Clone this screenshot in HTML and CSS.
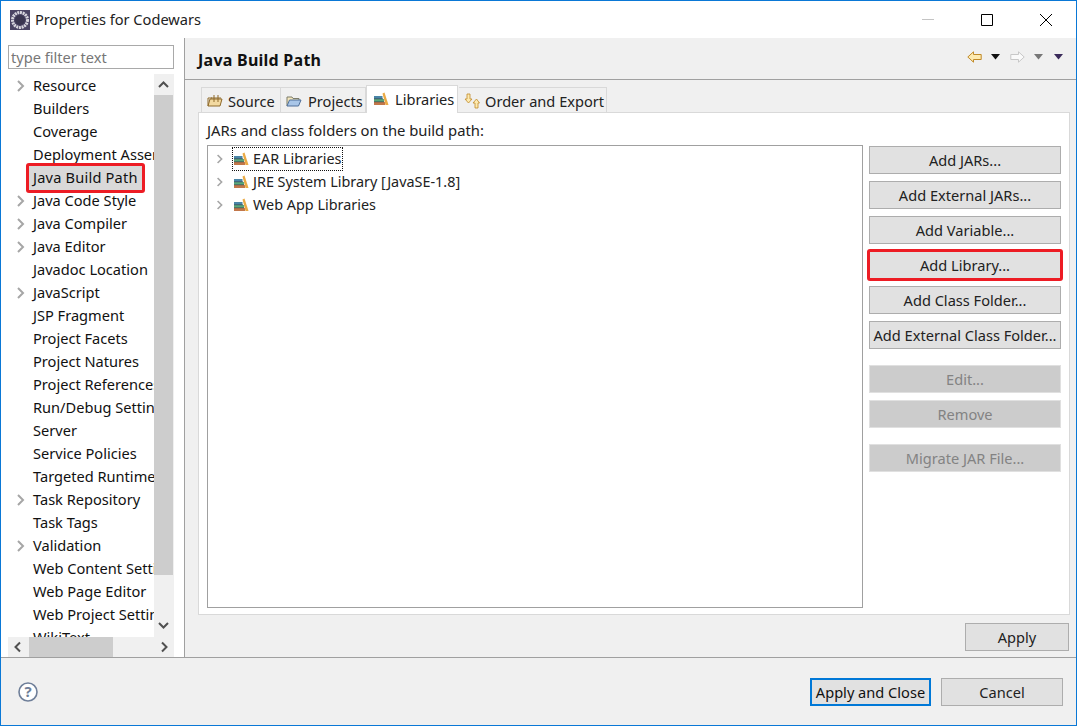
FILE: index.html
```html
<!DOCTYPE html>
<html lang="en">
<head>
<meta charset="utf-8">
<title>Properties for Codewars</title>
<link rel="stylesheet" href="styles.css">
</head>
<body>
<svg class="defs" width="0" height="0" aria-hidden="true">
  <symbol id="lib" viewBox="0 0 16 16">
    <path d="M1 5h8.500v3H1z" fill="#4a86a8"/>
    <path d="M1 8h10v3H1z" fill="#5aa97c"/>
    <path d="M1 11h11v3H1z" fill="#c2774a"/>
    <path d="M1 7.800h9M1 10.800h10" stroke="#3a4650" stroke-width=".7"/>
    <path d="M9.500 2.500l2-1 4 12.500h-3z" fill="#eaaa45"/>
  </symbol>
  <symbol id="chev" viewBox="0 0 10 12">
    <path d="M2 1l5 5-5 5" fill="none" stroke="#a6a6a6" stroke-width="2"/>
  </symbol>
</svg>
<div class="window">
  <header class="titlebar">
    <svg class="appicon" viewBox="0 0 20 20">
      <rect width="20" height="20" fill="#4b4464"/>
      <circle cx="10" cy="10" r="7.500" fill="none" stroke="#d8d6de" stroke-width="3" stroke-dasharray="2 .7"/>
      <circle cx="10" cy="10" r="5" fill="#3a3550"/>
    </svg>
    <span class="title">Properties for Codewars</span>
    <div class="winctl">
      <svg viewBox="0 0 12 12"><path d="M0 5.500h12" stroke="#c4c4c4"/></svg>
      <svg viewBox="0 0 12 12"><path d="M.5.500h11v11H.5z" fill="none" stroke="#000"/></svg>
      <svg viewBox="0 0 12 12"><path d="M0 0l12 12M12 0L0 12" stroke="#000"/></svg>
    </div>
  </header>
  <div class="main">
    <aside class="side">
      <input class="filter" placeholder="type filter text">
      <div class="treewrap">
        <div class="navtree">
          <ul class="nodes">
            <li class="node"><svg class="exp"><use href="#chev"/></svg>Resource</li>
            <li class="node">Builders</li>
            <li class="node">Coverage</li>
            <li class="node">Deployment Assembly</li>
            <li class="node"><span class="sel">Java Build Path</span></li>
            <li class="node"><svg class="exp"><use href="#chev"/></svg>Java Code Style</li>
            <li class="node"><svg class="exp"><use href="#chev"/></svg>Java Compiler</li>
            <li class="node"><svg class="exp"><use href="#chev"/></svg>Java Editor</li>
            <li class="node">Javadoc Location</li>
            <li class="node"><svg class="exp"><use href="#chev"/></svg>JavaScript</li>
            <li class="node">JSP Fragment</li>
            <li class="node">Project Facets</li>
            <li class="node">Project Natures</li>
            <li class="node">Project References</li>
            <li class="node">Run/Debug Settings</li>
            <li class="node">Server</li>
            <li class="node">Service Policies</li>
            <li class="node">Targeted Runtimes</li>
            <li class="node"><svg class="exp"><use href="#chev"/></svg>Task Repository</li>
            <li class="node">Task Tags</li>
            <li class="node"><svg class="exp"><use href="#chev"/></svg>Validation</li>
            <li class="node">Web Content Settings</li>
            <li class="node">Web Page Editor</li>
            <li class="node">Web Project Settings</li>
            <li class="node">WikiText</li>
          </ul>
        </div>
        <div class="vscroll">
          <svg class="sb-btn" viewBox="0 0 19 21"><path d="M5 13l4.500-4.500 4.500 4.500" fill="none" stroke="#505050" stroke-width="2"/></svg>
          <div class="vthumb"></div>
          <svg class="sb-btn end" viewBox="0 0 19 21"><path d="M5 8l4.500 4.500 4.500-4.500" fill="none" stroke="#505050" stroke-width="2"/></svg>
        </div>
      </div>
      <div class="hscroll">
        <svg class="hb" viewBox="0 0 21 20"><path d="M12 5.500l-4.500 4.500 4.500 4.500" fill="none" stroke="#505050" stroke-width="2"/></svg>
        <div class="hthumb"></div>
        <svg class="hb" viewBox="0 0 21 20"><path d="M9 5.500l4.500 4.500-4.500 4.500" fill="none" stroke="#505050" stroke-width="2"/></svg>
      </div>
    </aside>
    <section class="content">
      <div class="pagehead">
        <h1 class="pagetitle">Java Build Path</h1>
        <div class="navbtns">
          <svg class="arrow" viewBox="0 0 15 12"><path d="M.8 6L6.500.8v2.700h7.700v5H6.500v2.700z" fill="#fdeab0" stroke="#c08a2a"/></svg>
          <svg class="tri" viewBox="0 0 9 6"><path d="M0 0h9L4.500 5.500z" fill="#111"/></svg>
          <svg class="arrow fwd" viewBox="0 0 15 12"><path d="M14.200 6L8.500.8v2.700H.8v5h7.700v2.700z" fill="#fafafa" stroke="#c8c8c8"/></svg>
          <svg class="tri" viewBox="0 0 9 6"><path d="M0 0h9L4.500 5.500z" fill="#777"/></svg>
          <svg class="tri last" viewBox="0 0 9 6"><path d="M0 0h9L4.500 5.500z" fill="#3a2a5a"/></svg>
        </div>
      </div>
      <div class="pagebody">
        <div class="tabs">
          <div class="tab t-source">
            <svg class="tabicon src" viewBox="0 0 16 16"><path d="M1 13l2-7h12l-2 7z" fill="#f2d9a0" stroke="#8f6a2a"/><path d="M1 13V5h4M7 2v7M11 2v7M4 5h10" fill="none" stroke="#8f6a2a"/></svg>Source
          </div>
          <div class="tab t-projects">
            <svg class="tabicon" viewBox="0 0 16 16"><path d="M1 13V4h5l1 1.500h6V8" fill="#f5e7bd" stroke="#7c7c6a"/><path d="M1 13l2.500-6H15l-2.500 6z" fill="#a9c6e8" stroke="#4f6f99"/></svg>Projects
          </div>
          <div class="tab active">
            <svg class="tabicon"><use href="#lib"/></svg>Libraries
          </div>
          <div class="tab t-order">
            <svg class="tabicon src" viewBox="0 0 16 16"><path d="M3 1h3v5h2L4.500 10 1 6h2z" fill="#fdeab0" stroke="#c08a2a" stroke-width=".8"/><path d="M11 15h3v-5h1.500L12.500 6 9 10h2z" fill="#fdeab0" stroke="#c08a2a" stroke-width=".8"/></svg>Order and Export
          </div>
        </div>
        <div class="panel">
          <div class="jarlabel">JARs and class folders on the build path:</div>
          <div class="panelrow">
            <div class="libtree">
              <div class="libitem"><svg class="libexp"><use href="#chev"/></svg><span class="libfocus"><svg class="libicon"><use href="#lib"/></svg>EAR Libraries</span></div>
              <div class="libitem"><svg class="libexp"><use href="#chev"/></svg><span class="libplain"><svg class="libicon"><use href="#lib"/></svg>JRE System Library [JavaSE-1.8]</span></div>
              <div class="libitem"><svg class="libexp"><use href="#chev"/></svg><span class="libplain"><svg class="libicon"><use href="#lib"/></svg>Web App Libraries</span></div>
            </div>
            <div class="btncol">
              <button class="btn">Add JARs...</button>
              <button class="btn">Add External JARs...</button>
              <button class="btn">Add Variable...</button>
              <button class="btn marked">Add Library...</button>
              <button class="btn">Add Class Folder...</button>
              <button class="btn">Add External Class Folder...</button>
              <button class="btn off gap-a">Edit...</button>
              <button class="btn off">Remove</button>
              <button class="btn off gap-b">Migrate JAR File...</button>
            </div>
          </div>
        </div>
        <div class="applyrow"><button class="btn apply">Apply</button></div>
      </div>
    </section>
  </div>
  <footer class="footer">
    <svg class="help" viewBox="0 0 20 20"><circle cx="10" cy="10" r="9" fill="#fff" stroke="#6f7f99" stroke-width="1.600"/><text x="10" y="15" text-anchor="middle" class="helpq">?</text></svg>
    <button class="btn default">Apply and Close</button>
    <button class="btn cancel">Cancel</button>
  </footer>
</div>
</body>
</html>
```
FILE: styles.css
```css
* { box-sizing: border-box; }
html, body { margin: 0; padding: 0; }
body {
  width: 1077px;
  height: 726px;
  overflow: hidden;
  background: #fff;
  color: #111;
  font-family: "Noto Sans", "Open Sans", sans-serif;
  font-size: 14.6px;
}
.defs { position: absolute; }
.window {
  width: 1077px;
  height: 726px;
  display: flex;
  flex-direction: column;
  border: 1px solid #0a78d6;
}
.titlebar {
  height: 37px;
  flex: none;
  display: flex;
  align-items: center;
  padding-left: 9px;
  background: #fff;
}
.appicon { width: 20px; height: 20px; margin-right: 5px; }
.title { font-size: 14.6px; color: #222; margin-top: -2px; }
.winctl { margin-left: auto; display: flex; align-items: center; margin-right: 24px; gap: 47px; }
.winctl svg { width: 12px; height: 12px; display: block; }
.main { flex: 1; display: flex; min-height: 0; }
.side {
  width: 184px;
  flex: none;
  background: #fff;
  padding: 7px 10px 0 7px;
  border-right: 1px solid #a0a0a0;
  display: flex;
  flex-direction: column;
}
.filter {
  height: 24px;
  width: 166px;
  flex: none;
  border: 1px solid #a9a9a9;
  padding: 0 2px;
  font: inherit;
  background: #fff;
}
.filter::placeholder { color: #777; opacity: 1; }
.treewrap { display: flex; height: 563px; margin-top: 5px; flex: none; width: 166px; }
.navtree { width: 146px; overflow: hidden; flex: none; }
.nodes { list-style: none; margin: 0; padding: 0; }
.node {
  height: 23px;
  line-height: 23px;
  padding-left: 25px;
  position: relative;
  white-space: nowrap;
}
.exp { position: absolute; left: 8px; top: 6px; width: 10px; height: 12px; }
.sel {
  display: inline-block;
  height: 26px;
  line-height: 25px;
  margin-left: -5px;
  padding: 0 5px;
  background: #d9d9d9;
  outline: 3px solid #ed1c24;
  outline-offset: -1px;
  position: relative;
  top: -1px;
  vertical-align: top;
  width: 115px;
  letter-spacing: .2px;
  border-radius: 1px;
}
.vscroll { width: 20px; flex: none; background: #f0f0f0; display: flex; flex-direction: column; }
.sb-btn { width: 19px; height: 21px; display: block; flex: none; }
.vthumb { width: 19px; height: 480px; background: #cdcdcd; flex: none; }
.sb-btn.end { margin-top: auto; margin-bottom: 1px; }
.hscroll { width: 166px; height: 20px; background: #f0f0f0; display: flex; flex: none; }
.hb { width: 21px; height: 20px; display: block; flex: none; }
.hthumb { width: 84px; background: #cdcdcd; flex: none; margin-right: auto; }
.content { flex: 1; min-width: 0; background: #f0f0f0; display: flex; flex-direction: column; }
.pagehead {
  height: 42px;
  flex: none;
  border-bottom: 1px solid #a0a0a0;
  display: flex;
  align-items: center;
  padding: 2px 13px 0;
}
.pagetitle { margin: 0; font-size: 16px; font-weight: 700; color: #111; line-height: 24px; letter-spacing: .25px; }
.navbtns { margin-left: auto; display: flex; align-items: center; position: relative; top: -3px; }
.arrow { width: 15px; height: 12px; display: block; }
.tri { width: 9px; height: 6px; display: block; margin-left: 9px; }
.arrow.fwd { margin-left: 10px; }
.tri.last { margin-left: 11px; }
.pagebody { padding: 6px 7px 0 13px; flex: 1; min-height: 0; }
.tabs { display: flex; height: 26px; padding-left: 3px; align-items: flex-end; }
.tab {
  height: 25px;
  display: flex;
  align-items: center;
  white-space: nowrap;
  border: 1px solid #d9d9d9;
  border-bottom: 0;
  border-left: 0;
  background: #f0f0f0;
  padding: 1px 0 0 5px;
  color: #222;
}
.t-source { width: 80px; border-left: 1px solid #d9d9d9; }
.t-projects { width: 85px; }
.t-order { width: 148px; margin-left: 1px; }
.tab.active {
  width: 92px;
  height: 28px;
  background: #fff;
  padding: 0 0 2px 6px;
  margin-bottom: -1px;
  position: relative;
  border-left: 1px solid #d9d9d9;
}
.tabicon { width: 16px; height: 16px; margin-right: 6px; flex: none; }
.tabicon.src { margin-right: 5px; }
.panel {
  width: 872px;
  height: 503px;
  background: #fff;
  border: 1px solid #d9d9d9;
  padding: 7px 7px 0 8px;
  color: #222;
}
.jarlabel { line-height: 20px; height: 25px; font-size: 14.8px; }
.panelrow { display: flex; }
.libtree {
  width: 656px;
  height: 463px;
  border: 1px solid #a0a0a0;
  padding-top: 1px;
  font-size: 14.4px;
}
.libitem { height: 23px; display: flex; align-items: center; padding-left: 7px; color: #222; }
.libexp { width: 10px; height: 12px; margin-right: 7px; flex: none; transform: scale(.8); }
.libfocus, .libplain {
  display: flex;
  align-items: center;
  height: 24px;
  padding-right: 1px;
  white-space: nowrap;
  border: 1px dotted transparent;
}
.libfocus { border-color: #111; }
.libicon { width: 16px; height: 16px; margin-right: 4px; flex: none; }
.btncol { width: 192px; margin: 1px 0 0 6px; display: flex; flex-direction: column; gap: 7px; }
.btn {
  width: 192px;
  height: 28px;
  flex: none;
  padding: 0;
  border: 1px solid #adadad;
  background: #e1e1e1;
  font: inherit;
  color: #222;
  white-space: nowrap;
}
.btn.marked { outline: 3px solid #ed1c24; outline-offset: -1px; border-radius: 1px; }
.btn.off { background: #ccc; border-color: #e0e0e0; color: #838383; }
.gap-a { margin-top: 9px; }
.gap-b { margin-top: 9px; }
.applyrow { display: flex; justify-content: flex-end; padding-top: 8px; }
.apply { width: 104px; }
.footer {
  height: 68px;
  flex: none;
  background: #f0f0f0;
  border-top: 1px solid #a0a0a0;
  display: flex;
  align-items: center;
  padding: 0 13px 0 17px;
}
.help { width: 20px; height: 20px; margin-right: auto; }
.helpq { font-size: 15px; font-weight: 700; fill: #6f7f99; }
.default { width: 121px; border: 2px solid #0078d7; color: #111; }
.cancel { width: 122px; margin-left: 10px; }
```
